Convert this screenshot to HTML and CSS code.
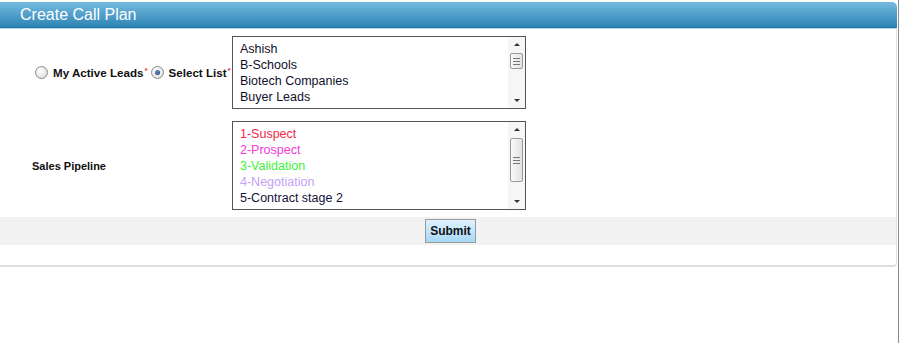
FILE: index.html
```html
<!DOCTYPE html>
<html>
<head>
<link rel="stylesheet" href="styles.css">
</head>
<body>
<div class="page">
  <div class="panel">
    <div class="panel-head">Create Call Plan</div>
    <div class="panel-body">
      <div class="form-row row-list">
        <div class="label-cell">
          <label class="opt"><span class="radio"></span>My Active Leads<span class="req">*</span></label>
          <label class="opt"><span class="radio checked"></span>Select List<span class="req">*</span></label>
        </div>
        <div class="listbox box-small">
          <div class="items">
            <div>Ashish</div>
            <div>B-Schools</div>
            <div>Biotech Companies</div>
            <div>Buyer Leads</div>
          </div>
          <div class="sbar">
            <span class="arr up"></span>
            <span class="thumb thumb-small"><i></i><i></i><i></i></span>
            <span class="arr down"></span>
          </div>
        </div>
      </div>
      <div class="form-row row-pipe">
        <div class="label-cell plain">Sales Pipeline</div>
        <div class="listbox box-big">
          <div class="items">
            <div class="st1">1-Suspect</div>
            <div class="st2">2-Prospect</div>
            <div class="st3">3-Validation</div>
            <div class="st4">4-Negotiation</div>
            <div class="st5">5-Contract stage 2</div>
          </div>
          <div class="sbar">
            <span class="arr up"></span>
            <span class="thumb thumb-big"><i></i><i></i><i></i></span>
            <span class="arr down"></span>
          </div>
        </div>
      </div>
      <div class="btn-row">
        <button class="btn">Submit</button>
      </div>
    </div>
  </div>
</div>
</body>
</html>
```

FILE: styles.css
```css
html, body {
  margin: 0;
  padding: 0;
  background: #fff;
}

.page {
  width: 899px;
  height: 343px;
  border-right: 1px solid #8c8c8c;
  font-family: "Liberation Sans", Arial, sans-serif;
  padding-top: 2px;
  box-sizing: border-box;
}

.panel {
  width: 897px;
}

.panel-head {
  height: 25px;
  line-height: 25px;
  padding-left: 20px;
  color: #fff;
  font-size: 16px;
  background: linear-gradient(#75badf, #4a9ac6 60%, #2f84b4);
  border-bottom: 1px solid #1f73a4;
  border-top-right-radius: 5px;
  box-shadow: 0 1px 0 #b3d9ee;
}

.panel-body {
  padding-top: 8px;
  height: 229px;
  border-bottom: 2px solid #dedede;
  border-right: 1px solid #e4e4e4;
  border-bottom-right-radius: 4px;
}

.form-row {
  display: flex;
  align-items: center;
}

.row-pipe {
  margin-top: 12px;
}

.label-cell {
  width: 232px;
  flex-shrink: 0;
  box-sizing: border-box;
  padding-left: 35px;
  display: flex;
  align-items: center;
  font-size: 11px;
  font-weight: bold;
  color: #111;
  white-space: nowrap;
}

.label-cell.plain {
  padding-left: 32px;
}

.opt {
  display: flex;
  align-items: center;
  flex-shrink: 0;
  margin-right: 3px;
  font-size: 11.6px;
}

.radio {
  width: 13px;
  height: 13px;
  flex-shrink: 0;
  border-radius: 50%;
  border: 1px solid #8a8a8a;
  background: radial-gradient(circle at 40% 35%, #fff, #d6d6d6);
  margin-right: 5px;
  box-sizing: border-box;
  position: relative;
}

.radio.checked::after {
  content: "";
  position: absolute;
  left: 3px;
  top: 3px;
  width: 5px;
  height: 5px;
  border-radius: 50%;
  background: radial-gradient(circle at 40% 35%, #6c8fb8, #1d3c6a);
}

.req {
  color: #e0302a;
  font-size: 8px;
  align-self: flex-start;
  margin-left: 1px;
}

.listbox {
  width: 294px;
  flex-shrink: 0;
  border: 1px solid #555;
  display: flex;
  box-sizing: border-box;
  background: #fff;
}

.box-small {
  height: 73px;
}

.box-big {
  height: 89px;
}

.items {
  flex: 1;
  padding: 4px 0 0 7px;
  font-size: 12.5px;
  line-height: 16px;
  color: #10102a;
}

.st1 { color: #f2284a; }
.st2 { color: #f23ad8; }
.st3 { color: #3ef23a; }
.st4 { color: #c4a2f5; }
.st5 { color: #14103a; }

.sbar {
  width: 17px;
  display: flex;
  flex-direction: column;
  align-items: center;
  background: #f6f6f6;
}

.arr {
  width: 0;
  height: 0;
  border-left: 3px solid transparent;
  border-right: 3px solid transparent;
  margin: 6px 0;
}

.arr.up {
  border-bottom: 3px solid #333;
}

.arr.down {
  border-top: 3px solid #333;
  margin-top: auto;
}

.thumb {
  width: 11px;
  border: 1px solid #999;
  border-radius: 2px;
  background: linear-gradient(to right, #fafafa, #e2e2e2);
  display: flex;
  flex-direction: column;
  justify-content: center;
  align-items: center;
  gap: 2px;
  margin-top: 1px;
}

.thumb i {
  display: block;
  width: 7px;
  height: 1px;
  background: #777;
}

.thumb-small {
  height: 14px;
}

.thumb-big {
  height: 42px;
}

.btn-row {
  margin-top: 7px;
  height: 28px;
  background: #f2f2f2;
  display: flex;
  justify-content: center;
  align-items: center;
}

.btn {
  width: 51px;
  height: 24px;
  margin-left: 1px;
  transform: translateX(2px);
  border: 1px solid #9a9a9a;
  background: linear-gradient(#dff2ff, #a6d8f7);
  font-family: "Liberation Sans", Arial, sans-serif;
  font-size: 12px;
  font-weight: bold;
  color: #111;
  padding: 0;
}
```
